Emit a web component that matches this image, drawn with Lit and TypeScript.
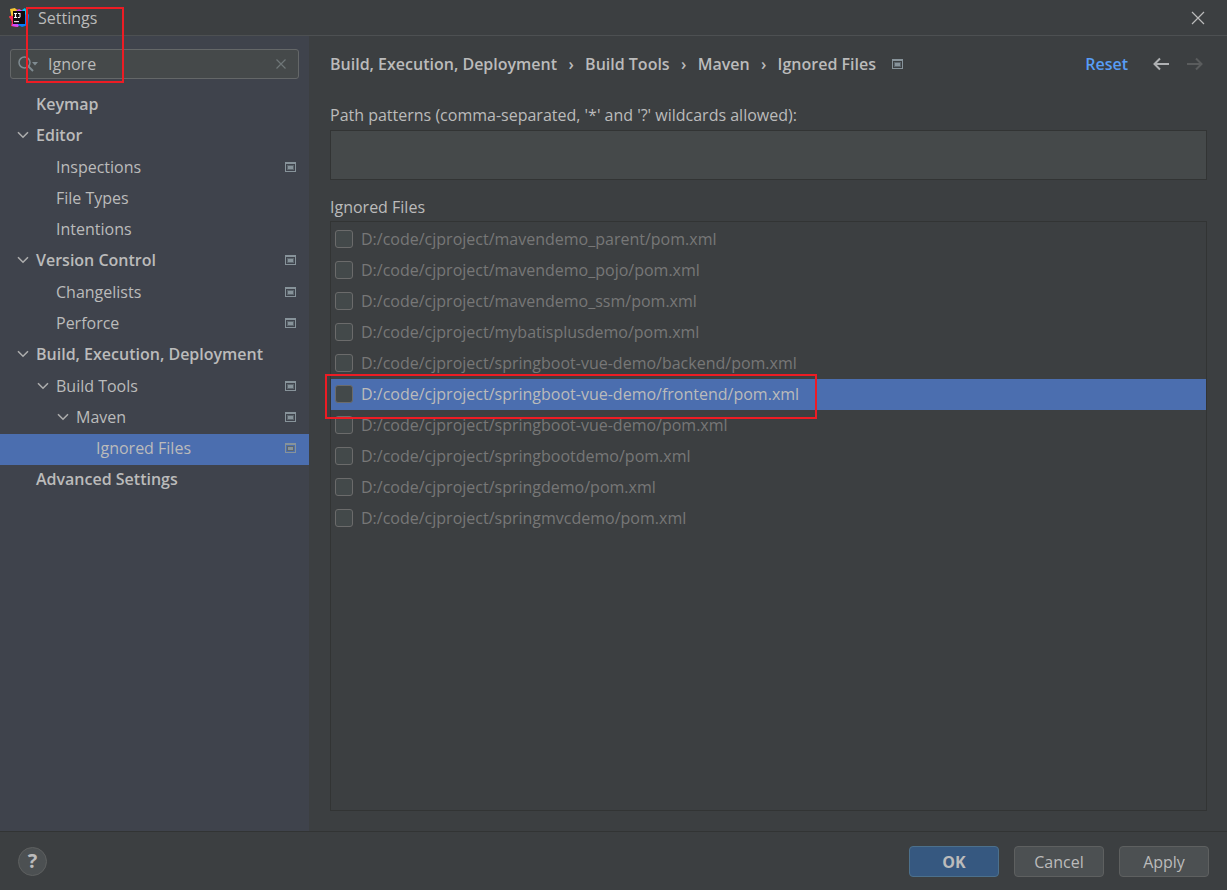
import { LitElement, html, css, svg, nothing } from "lit";
import { customElement } from "lit/decorators.js";
import { classMap } from "lit/directives/class-map.js";

interface TreeNode {
  label: string;
  project?: boolean;
  selected?: boolean;
  children?: TreeNode[];
}

const TREE: TreeNode[] = [
  { label: "Keymap" },
  {
    label: "Editor",
    children: [
      { label: "Inspections", project: true },
      { label: "File Types" },
      { label: "Intentions" },
    ],
  },
  {
    label: "Version Control",
    project: true,
    children: [
      { label: "Changelists", project: true },
      { label: "Perforce", project: true },
    ],
  },
  {
    label: "Build, Execution, Deployment",
    children: [
      {
        label: "Build Tools",
        project: true,
        children: [
          {
            label: "Maven",
            project: true,
            children: [{ label: "Ignored Files", project: true, selected: true }],
          },
        ],
      },
    ],
  },
  { label: "Advanced Settings" },
];

const FILES = [
  "mavendemo_parent/pom.xml",
  "mavendemo_pojo/pom.xml",
  "mavendemo_ssm/pom.xml",
  "mybatisplusdemo/pom.xml",
  "springboot-vue-demo/backend/pom.xml",
  "springboot-vue-demo/frontend/pom.xml",
  "springboot-vue-demo/pom.xml",
  "springbootdemo/pom.xml",
  "springdemo/pom.xml",
  "springmvcdemo/pom.xml",
];
const SELECTED_FILE = 5;

const CRUMBS = ["Build, Execution, Deployment", "Build Tools", "Maven", "Ignored Files"];

const projectIcon = html`<svg class="project" width="11" height="10" viewBox="0 0 11 10" aria-hidden="true">
  <path fill="#87939a" fill-rule="evenodd" d="M0 0h11v10H0zM1 2v7h9V2z" />
  <path fill="#5c666d" fill-rule="evenodd" d="M2 3h7v5H2z" />
  <path fill="#87939a" d="M3 4h5v3H3z" />
</svg>`;

const chevron = html`<svg width="14" height="8" viewBox="0 0 14 8" aria-hidden="true">
  <path d="M2 1.200 7 6.200 12 1.200" fill="none" stroke="#adadad" stroke-width="1.600" />
</svg>`;

const arrow = (d: string, color: string) => html`<svg width="18" height="14" viewBox="0 0 18 14" aria-hidden="true">
  ${svg`<path d=${d} fill="none" stroke=${color} stroke-width="2" />`}
</svg>`;

@customElement("app-root")
export class AppRoot extends LitElement {
  static styles = css`
    :host {
      display: flex;
      flex-direction: column;
      position: relative;
      min-height: 100vh;
      background: #3c3f41;
      color: #bbbbbb;
      font: 16px/22px "Open Sans", "Noto Sans", sans-serif;
    }
    * { box-sizing: border-box; }
    ul, ol { list-style: none; margin: 0; padding: 0; }
    button, input, textarea { font: inherit; color: inherit; }
    button { cursor: pointer; }
    svg { display: block; flex: none; }

    .titlebar {
      display: flex;
      align-items: center;
      height: 36px;
      padding: 0 22px 0 9px;
      border-bottom: 1px solid #4d5052;
    }
    .title { margin: 0 auto 0 9px; font-size: inherit; font-weight: 400; }
    .plain { display: flex; background: none; border: 0; padding: 0; }

    .body { flex: 1; display: flex; }
    .sidebar { flex: none; width: 309px; background: #3f434c; }
    .search {
      display: flex;
      align-items: center;
      height: 30px;
      margin: 13px 10px 11px;
      padding: 0 11px 0 7px;
      background: #45494a;
      border: 1px solid #646768;
      border-radius: 3px;
    }
    .search input {
      flex: 1;
      min-width: 0;
      margin-left: 9px;
      padding: 0;
      border: 0;
      outline: 0;
      background: none;
    }
    .node {
      display: flex;
      align-items: center;
      height: 31px;
      padding: 0 13px 4px 0;
    }
    .node.selected { background: #4b6eaf; }
    .toggle { display: flex; flex: none; width: 20px; }
    .name { flex: 1; white-space: nowrap; }
    .level0 { padding-left: 16px; font-weight: 600; }
    .level1 { padding-left: 36px; }
    .level2 { padding-left: 56px; }
    .level3 { padding-left: 76px; }
    .tree > li > ul { margin-top: 1px; }

    .content {
      flex: 1;
      min-width: 0;
      display: flex;
      flex-direction: column;
      padding: 17px 20px 20px 21px;
    }
    .heading { display: flex; align-items: center; margin-bottom: 29px; padding-right: 3px; }
    .crumbs { display: flex; align-items: center; font-weight: 600; }
    .crumbs li { display: flex; align-items: center; white-space: nowrap; }
    .crumbs li + li::before { content: "›"; width: 28px; text-align: center; }
    .crumbs + .project { margin-left: 16px; }
    .reset { margin-left: auto; color: #589df6; font-weight: 600; text-decoration: none; }
    .back { margin: 0 16px 0 24px; }

    .patterns {
      height: 50px;
      margin: 4px 0 16px;
      padding: 4px;
      border: 1px solid #323434;
      background: #45494a;
      outline: 0;
      resize: none;
    }
    .caption { margin: 0; font-size: inherit; font-weight: 400; }
    .files {
      flex: 1;
      margin-top: 3px;
      padding-top: 2px;
      border: 1px solid #323434;
    }
    .file {
      position: relative;
      display: flex;
      align-items: center;
      height: 31px;
      padding: 0 0 2px 4px;
      color: #777777;
    }
    .file.selected { background: #4b6eaf; color: #bbbbbb; }
    .file label { display: flex; align-items: center; gap: 8px; white-space: nowrap; }
    .file input {
      appearance: none;
      width: 18px;
      height: 18px;
      margin: 0;
      border: 1px solid #6b6b6b;
      border-radius: 3px;
      background: #43494a;
    }

    .footer {
      display: flex;
      align-items: center;
      gap: 15px;
      height: 59px;
      padding: 0 18px;
      border-top: 1px solid #323434;
    }
    .help {
      width: 29px;
      height: 29px;
      margin-right: auto;
      padding: 0;
      border: 1px solid #5e6060;
      border-radius: 50%;
      background: #4c5052;
      font-size: 20px;
      font-weight: 700;
    }
    .btn {
      width: 90px;
      height: 31px;
      padding: 2px 0 0;
      border: 1px solid #5e6060;
      border-radius: 4px;
      background: #4c5052;
    }
    .btn.primary { border-color: #4c708c; background: #365880; font-weight: 700; }

    .mark { position: absolute; border: 2px solid #ed1c24; pointer-events: none; }
    .mark-search { left: 26px; top: 7px; width: 98px; height: 76px; }
    .mark-file { left: -6px; top: -5px; width: 492px; height: 45px; z-index: 1; }
  `;

  private renderNodes(nodes: TreeNode[], level = 0): unknown {
    return nodes.map(
      (n) => html`<li>
        <div class=${classMap({ node: true, [`level${level}`]: true, selected: !!n.selected })}>
          <span class="toggle">${n.children ? chevron : nothing}</span>
          <span class="name">${n.label}</span>
          ${n.project ? projectIcon : nothing}
        </div>
        ${n.children ? html`<ul>${this.renderNodes(n.children, level + 1)}</ul>` : nothing}
      </li>`,
    );
  }

  render() {
    return html`
      <header class="titlebar">
        <svg width="20" height="20" viewBox="0 0 20 20" aria-hidden="true">
          <path fill="#fc801d" d="M2 3 8 1l4 4-5 6-7-1 2-2z" />
          <path fill="#fe2857" d="M0 8h7l5 8-4 3-6-1 1-4z" />
          <path fill="#f7c934" d="M1 1 6 0l3 4-5 4-2-2z" />
          <path fill="#d249fc" d="m7 3 3-2 4 2-3 3zM4 15h7l-2 4-6-1z" />
          <path fill="#087cfa" d="m11 4 5-3 4 6-1 10-6 2-4-2z" />
          <path fill="#07c3f2" d="m13 2 3-2 3 5v4l-4-4z" />
          <path fill="#120a10" d="M4 3h12v13H4z" />
          <path fill="#fff" d="M5 5h3v1h-.9v3H8v1H5V9h.9V6H5zM9 5h2.500v4l-1 1H8.800V9h1.700V6H9z" />
          <path fill="#ddd" d="M5 13h5v1.200H5z" />
        </svg>
        <h1 class="title">Settings</h1>
        <button class="plain" aria-label="Close">
          <svg width="14" height="14" viewBox="0 0 14 14"><path d="M1 1 13 13M13 1 1 13" stroke="#bbb" stroke-width="1.200" /></svg>
        </button>
      </header>
      <div class="body">
        <nav class="sidebar" aria-label="Settings categories">
          <div class="search">
            <svg width="21" height="18" viewBox="0 0 21 18" aria-hidden="true">
              <circle cx="6.500" cy="7.500" r="5.500" fill="none" stroke="#7f8b91" stroke-width="1.500" />
              <path d="m10.500 11.500 4.500 4.500" stroke="#7f8b91" stroke-width="2" />
              <path d="M14 7h6l-3 3.500z" fill="#7f8b91" />
            </svg>
            <input type="text" aria-label="Search settings" value="Ignore" />
            <button class="plain" aria-label="Clear search">
              <svg width="12" height="12" viewBox="0 0 12 12"><path d="M1.500 1.500 10.500 10.500M10.500 1.500 1.500 10.500" stroke="#6f7678" stroke-width="1.200" /></svg>
            </button>
          </div>
          <ul class="tree">${this.renderNodes(TREE)}</ul>
        </nav>
        <main class="content">
          <div class="heading">
            <ol class="crumbs">${CRUMBS.map((c) => html`<li>${c}</li>`)}</ol>
            ${projectIcon}
            <a class="reset" href="#">Reset</a>
            <button class="plain back" aria-label="Back">${arrow("M17 7H2M8 1.500 2.500 7 8 12.500", "#afb1b3")}</button>
            <button class="plain" aria-label="Forward">${arrow("M1 7h15M10 1.500 15.500 7 10 12.500", "#5a5c5d")}</button>
          </div>
          <label for="patterns">Path patterns (comma-separated, '*' and '?' wildcards allowed):</label>
          <textarea id="patterns" class="patterns"></textarea>
          <h2 class="caption">Ignored Files</h2>
          <ul class="files">
            ${FILES.map(
              (f, i) => html`<li class=${classMap({ file: true, selected: i === SELECTED_FILE })}>
                <label><input type="checkbox" />D:/code/cjproject/${f}</label>
                ${i === SELECTED_FILE ? html`<span class="mark mark-file"></span>` : nothing}
              </li>`,
            )}
          </ul>
        </main>
      </div>
      <footer class="footer">
        <button class="help" aria-label="Help">?</button>
        <button class="btn primary">OK</button>
        <button class="btn">Cancel</button>
        <button class="btn">Apply</button>
      </footer>
      <span class="mark mark-search"></span>
    `;
  }
}
